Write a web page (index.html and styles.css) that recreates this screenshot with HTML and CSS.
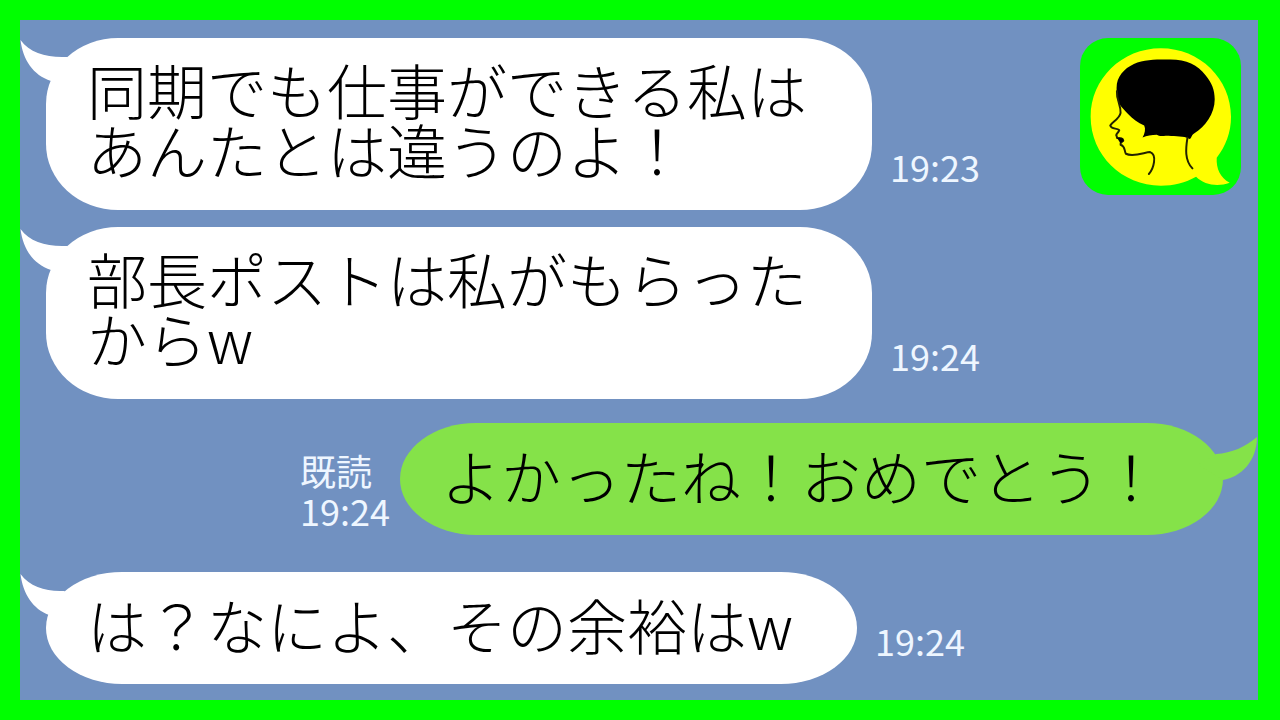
FILE: index.html
```html
<!DOCTYPE html>
<html lang="ja">
<head>
  <meta charset="UTF-8" />
  <meta name="viewport" content="width=device-width, initial-scale=1.0"/>
  <title>トーク</title>
  <link rel="stylesheet" href="styles.css">
</head>
<body>
  <main class="chat">
    <div class="message">
      <div class="bubble">
        <svg class="tail" viewBox="0 0 60 48" aria-hidden="true"><path d="M0.500 2 C10 15 27 20 47 19 L60 30 L31 43 C13 37 3 22 0.500 2Z"/></svg>
        <p>同期でも仕事ができる私は<br>あんたとは違うのよ！</p>
      </div>
      <time class="time">19:23</time>
      <svg class="logo" viewBox="28 38 484 472" role="img" aria-label="アイコン">
        <rect x="28" y="38" width="484" height="472" rx="84" fill="#00ff00"/>
        <path fill="#ffff00" d="M271 69 C388 69 482 161 482 275 C482 322 466 364 439 398 C437 431 450 458 478 473 C442 486 402 480 377 455 C345 473 309 482 271 482 C154 482 60 390 60 275 C60 161 154 69 271 69Z"/>
        <path d="M138 188 C138 154 160 130 190 116 C222 102 260 103 300 103 C348 103 382 119 406 151 C424 173 433 194 433 222 C433 266 404 304 372 324 C362 330 365 336 358 342 L349 338 C332 332 307 334 286 332 C276 333 265 334 259 329 C243 330 229 331 216 337 C223 325 226 312 221 301 C202 294 186 281 171 265 C154 247 138 231 138 207Z"/>
        <path class="line" d="M139 198 C138 227 151 239 150 263 C147 281 124 291 119 301 C122 313 139 308 146 315 C144 323 136 325 137 331 C140 335 138 336 140 339 C151 337 157 341 158 347 C153 352 148 352 150 359 C165 364 160 376 166 386 C187 397 222 382 239 381 C261 389 249 432 235 447"/>
        <path class="line" d="M351 338 C346 369 342 406 366 430"/>
        <path d="M139 338 L158 340 L159 348 L149 354Z"/>
      </svg>
    </div>

    <div class="message">
      <div class="bubble">
        <svg class="tail" viewBox="0 0 60 48" aria-hidden="true"><path d="M0.500 2 C10 15 27 20 47 19 L60 30 L31 43 C13 37 3 22 0.500 2Z"/></svg>
        <p>部長ポストは私がもらった<br>からw</p>
      </div>
      <time class="time">19:24</time>
    </div>

    <div class="message sent">
      <div class="status">
        <span>既読</span>
        <time>19:24</time>
      </div>
      <div class="bubble single">
        <svg class="tail" viewBox="0 0 60 48" aria-hidden="true"><path d="M59 2 C47 12 34 18 18 19 L0 30 L25 45 C43 42 59 26 59 2Z"/></svg>
        <p>よかったね！おめでとう！</p>
      </div>
    </div>

    <div class="message last">
      <div class="bubble single">
        <svg class="tail" viewBox="0 0 60 48" aria-hidden="true"><path d="M0.500 2 C10 15 27 20 44 19 L60 30 L29 43 C13 37 3 22 0.500 2Z"/></svg>
        <p>は？なによ、その余裕はw</p>
      </div>
      <time class="time">19:24</time>
    </div>
  </main>
</body>
</html>
```
FILE: styles.css
```css
* {
  box-sizing: border-box;
}

body {
  margin: 0;
  font-family: "Noto Sans CJK JP", sans-serif;
  color: #000;
}

.chat {
  display: flex;
  flex-direction: column;
  min-height: 100vh;
  padding: 18px 17px 16px 26px;
  background: #7191c1;
  border: 20px solid #00ff00;
  border-right-width: 22px;
}

.message {
  display: flex;
  align-items: flex-end;
  gap: 18px;
  margin-bottom: 17px;
}

.bubble {
  position: relative;
  padding: 21px 65px 31px 41px;
  background: white;
  border-radius: 72px / 66px;
}

.bubble.single {
  padding: 22px 64px 30px 41px;
  border-radius: 76px / 56px;
}

.bubble p {
  margin: 0;
  font-size: 60px;
  font-weight: 300;
  font-kerning: none;
  line-height: 60px;
}

/* speech tail reaches out to the edge of the chat */
.tail {
  position: absolute;
  top: 0;
  left: -26px;
  width: 60px;
  height: 48px;
  fill: white;
}

.time,
.status {
  color: #eef6ff;
  font-size: 36px;
  line-height: 40px;
}

.time {
  margin-bottom: 24px;
}

.logo {
  align-self: flex-start;
  width: 161px;
  height: 157px;
  margin-left: auto;
}

.line {
  fill: none;
  stroke: #222200;
  stroke-width: 6;
  stroke-linecap: round;
  stroke-linejoin: round;
}

.sent {
  justify-content: flex-end;
  gap: 10px;
  margin: 7px 18px 37px 0;
}

.sent .bubble.single {
  padding-right: 62px;
  background: #85e249;
}

.sent .tail {
  top: 12px;
  left: auto;
  right: -35px;
  fill: #85e249;
}

.status {
  display: flex;
  flex-direction: column;
  margin-bottom: 5px;
}

.last {
  margin-bottom: 0;
}
```
